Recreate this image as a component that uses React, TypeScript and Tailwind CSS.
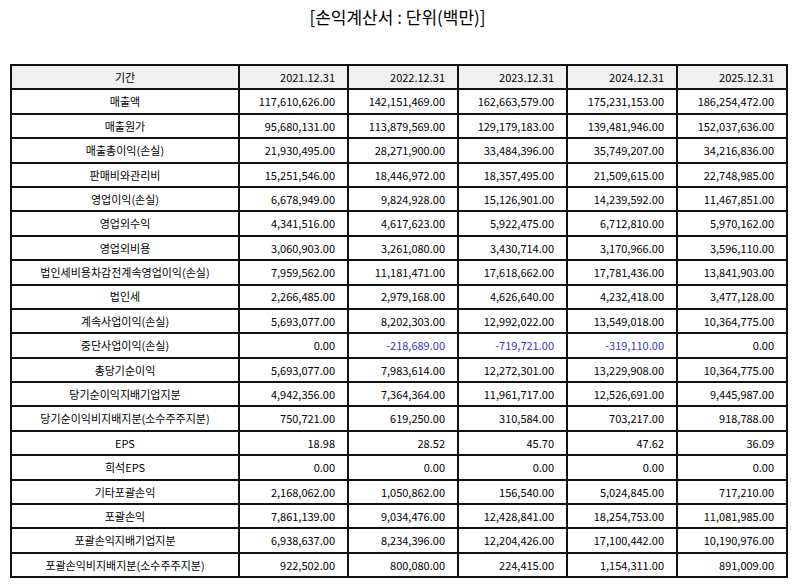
const years = ['2021.12.31', '2022.12.31', '2023.12.31', '2024.12.31', '2025.12.31'];

const rows: [string, string[]][] = [
  ['매출액', ['117,610,626.00', '142,151,469.00', '162,663,579.00', '175,231,153.00', '186,254,472.00']],
  ['매출원가', ['95,680,131.00', '113,879,569.00', '129,179,183.00', '139,481,946.00', '152,037,636.00']],
  ['매출총이익(손실)', ['21,930,495.00', '28,271,900.00', '33,484,396.00', '35,749,207.00', '34,216,836.00']],
  ['판매비와관리비', ['15,251,546.00', '18,446,972.00', '18,357,495.00', '21,509,615.00', '22,748,985.00']],
  ['영업이익(손실)', ['6,678,949.00', '9,824,928.00', '15,126,901.00', '14,239,592.00', '11,467,851.00']],
  ['영업외수익', ['4,341,516.00', '4,617,623.00', '5,922,475.00', '6,712,810.00', '5,970,162.00']],
  ['영업외비용', ['3,060,903.00', '3,261,080.00', '3,430,714.00', '3,170,966.00', '3,596,110.00']],
  ['법인세비용차감전계속영업이익(손실)', ['7,959,562.00', '11,181,471.00', '17,618,662.00', '17,781,436.00', '13,841,903.00']],
  ['법인세', ['2,266,485.00', '2,979,168.00', '4,626,640.00', '4,232,418.00', '3,477,128.00']],
  ['계속사업이익(손실)', ['5,693,077.00', '8,202,303.00', '12,992,022.00', '13,549,018.00', '10,364,775.00']],
  ['중단사업이익(손실)', ['0.00', '-218,689.00', '-719,721.00', '-319,110.00', '0.00']],
  ['총당기순이익', ['5,693,077.00', '7,983,614.00', '12,272,301.00', '13,229,908.00', '10,364,775.00']],
  ['당기순이익지배기업지분', ['4,942,356.00', '7,364,364.00', '11,961,717.00', '12,526,691.00', '9,445,987.00']],
  ['당기순이익비지배지분(소수주주지분)', ['750,721.00', '619,250.00', '310,584.00', '703,217.00', '918,788.00']],
  ['EPS', ['18.98', '28.52', '45.70', '47.62', '36.09']],
  ['희석EPS', ['0.00', '0.00', '0.00', '0.00', '0.00']],
  ['기타포괄손익', ['2,168,062.00', '1,050,862.00', '156,540.00', '5,024,845.00', '717,210.00']],
  ['포괄손익', ['7,861,139.00', '9,034,476.00', '12,428,841.00', '18,254,753.00', '11,081,985.00']],
  ['포괄손익지배기업지분', ['6,938,637.00', '8,234,396.00', '12,204,426.00', '17,100,442.00', '10,190,976.00']],
  ['포괄손익비지배지분(소수주주지분)', ['922,502.00', '800,080.00', '224,415.00', '1,154,311.00', '891,009.00']],
];

export default function App() {
  return (
    <div className="w-[795px] h-[586px] bg-white text-black font-['Noto_Sans_CJK_KR','Noto_Sans',sans-serif] pt-[5px]">
      {/* Title */}
      <h1 className="text-center text-[17px] leading-[24px]">[손익계산서 : 단위(백만)]</h1>

      {/* Table */}
      <table className="ml-[10px] mt-[35px] w-[776px] table-fixed border-collapse text-[11px]">
        <colgroup>
          <col className="w-[228px]" />
          <col className="w-[109px]" />
          <col className="w-[110px]" />
          <col className="w-[109px]" />
          <col className="w-[110px]" />
          <col className="w-[110px]" />
        </colgroup>
        <thead>
          <tr className="h-[24.4px] bg-[#f0f0f0]">
            <th className="border-2 border-[#111] font-normal text-center p-0">기간</th>
            {years.map((y) => (
              <th key={y} className="border-2 border-[#111] font-normal text-right pr-[12px] p-0">
                {y}
              </th>
            ))}
          </tr>
        </thead>
        <tbody>
          {rows.map(([label, vals]) => (
            <tr key={label} className="h-[24.4px]">
              <td className="border-2 border-[#111] text-center p-0">{label}</td>
              {vals.map((v, i) => (
                <td
                  key={i}
                  className={`border-2 border-[#111] text-right pr-[12px] p-0 ${v.startsWith('-') ? 'text-[#3535d0]' : ''}`}
                >
                  {v}
                </td>
              ))}
            </tr>
          ))}
        </tbody>
      </table>
    </div>
  );
}
